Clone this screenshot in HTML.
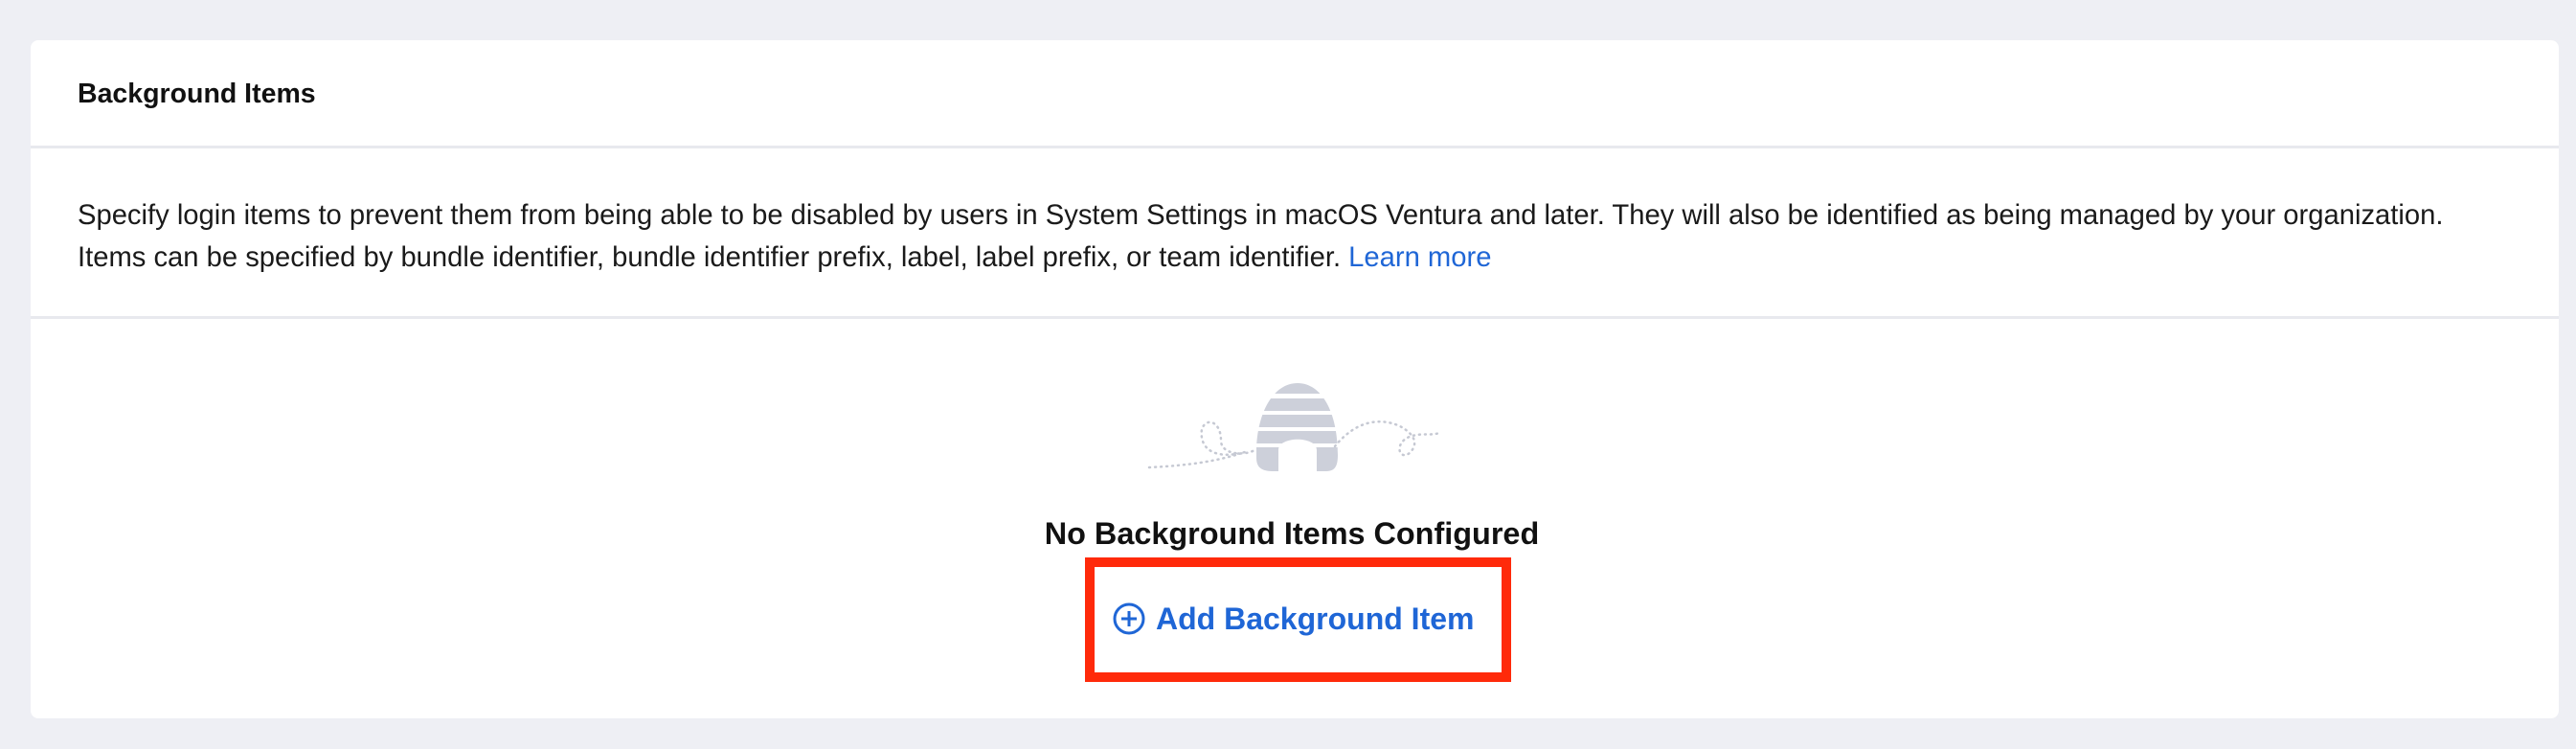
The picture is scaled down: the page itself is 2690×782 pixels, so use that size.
<!DOCTYPE html>
<html><head><style>
body{margin:0;width:2690px;height:782px;background:#eeeff4;font-family:"Liberation Sans",sans-serif;overflow:hidden;position:relative}
.card{position:absolute;left:32px;top:42px;width:2640px;height:708px;background:#fff;border-radius:8px}
.hdr{position:absolute;left:0;top:0;right:0;height:110px;border-bottom:3px solid #e8e9ee}
.hdr span{position:absolute;left:49px;top:40px;font-size:28.5px;font-weight:bold;color:#111}
.desc{position:absolute;left:49px;top:161px;font-size:29.2px;line-height:44px;color:#1a1a1a;white-space:nowrap}
.desc a{color:#1f66d6;text-decoration:none}
.div2{position:absolute;left:0;right:0;top:288px;height:3px;background:#e8e9ee}
.title{position:absolute;left:8px;right:0;top:539px;text-align:center;font-size:32.4px;font-weight:bold;color:#111}
.box{position:absolute;left:1133px;top:582px;width:425px;height:110px;border:10px solid #ff2a0a}
.add{position:absolute;left:1163px;top:628px;font-size:32px;font-weight:bold;color:#1f66d6;white-space:nowrap}
</style></head><body>
<div class="card">
<div class="hdr"><span>Background Items</span></div>
<div class="desc">Specify login items to prevent them from being able to be disabled by users in System Settings in macOS Ventura and later. They will also be identified as being managed by your organization.<br>Items can be specified by bundle identifier, bundle identifier prefix, label, label prefix, or team identifier. <a>Learn more</a></div>
<div class="div2"></div>
</div>
<svg style="position:absolute;left:1190px;top:395px" width="330" height="105" viewBox="1190 395 330 105">
<defs><clipPath id="h"><path d="M1355 400 C1330 400 1313 430 1312 470 L1312 478 C1312 490 1320 492 1330 492 L1335 492 L1335 470 C1335 455 1375 455 1375 470 L1375 492 L1385 492 C1395 492 1397 485 1397 475 C1397 430 1380 400 1355 400 Z"/></clipPath></defs>
<g clip-path="url(#h)" fill="#cdd0da">
<rect x="1300" y="395" width="110" height="16"/>
<rect x="1300" y="416" width="110" height="13"/>
<rect x="1300" y="433" width="110" height="13"/>
<rect x="1300" y="450" width="110" height="13"/>
<rect x="1300" y="467" width="110" height="30"/>
</g>
<g fill="none" stroke="#c6c9d3" stroke-width="2.5" stroke-dasharray="1 5" stroke-linecap="round">
<path d="M1200 488 C1240 486 1270 482 1300 472 C1270 480 1252 470 1255 448 C1260 435 1275 440 1275 460 C1275 475 1300 476 1310 470"/>
<path d="M1394 466 C1415 440 1440 435 1462 445 C1480 455 1480 465 1472 473 C1460 482 1455 460 1475 455 C1485 452 1495 455 1503 452"/>
</g>
</svg>
<div class="title">No Background Items Configured</div>
<div class="box"></div>
<svg style="position:absolute;left:1162px;top:629px" width="34" height="34" viewBox="0 0 34 34"><circle cx="17" cy="17" r="15" fill="none" stroke="#1f66d6" stroke-width="3"/><path d="M17 9V25M9 17H25" stroke="#1f66d6" stroke-width="3"/></svg>
<div class="add" style="left:1207px">Add Background Item</div>
</body></html>
